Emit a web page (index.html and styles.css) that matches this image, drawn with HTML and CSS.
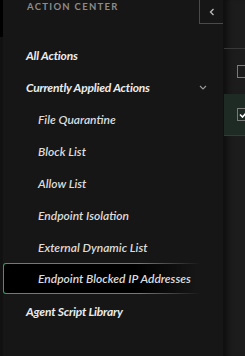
FILE: index.html
```html
<!DOCTYPE html>
<html lang="en">

<head>
    <meta charset="UTF-8">
    <meta name="viewport" content="width=device-width, initial-scale=1.0">
    <title>Action Center</title>
    <link rel="stylesheet" href="styles.css">
</head>

<body>
    <div class="rail"></div>

    <!-- Sidebar -->
    <aside class="sidebar">
        <div class="sidebar-head">
            <span class="sidebar-title">ACTION CENTER</span>
            <button class="collapse-btn" aria-label="Collapse">
                <svg width="6" height="8" viewBox="0 0 6 8">
                    <polyline points="4.5,1 1.5,4 4.5,7" fill="none" stroke="#bdbdbd" stroke-width="1.3"></polyline>
                </svg>
            </button>
        </div>

        <nav class="nav">
            <a class="nav-item top">All Actions</a>
            <a class="nav-item top group">
                <span>Currently Applied Actions</span>
                <svg class="caret" width="8" height="5" viewBox="0 0 8 5">
                    <polyline points="1,1 4,4 7,1" fill="none" stroke="#9a9a9a" stroke-width="1.1"></polyline>
                </svg>
            </a>
            <a class="nav-item sub">File Quarantine</a>
            <a class="nav-item sub">Block List</a>
            <a class="nav-item sub">Allow List</a>
            <a class="nav-item sub">Endpoint Isolation</a>
            <a class="nav-item sub">External Dynamic List</a>
            <a class="nav-item sub active">Endpoint Blocked IP Addresses</a>
            <a class="nav-item top">Agent Script Library</a>
        </nav>
    </aside>

    <!-- Main content peeking in -->
    <main class="main">
        <div class="table">
            <div class="row">
                <span class="check"></span>
            </div>
            <div class="row selected">
                <span class="check">
                    <svg width="9" height="7" viewBox="0 0 9 7">
                        <polyline points="1,3.5 3.5,6 8,1" fill="none" stroke="#fff" stroke-width="1.6"></polyline>
                    </svg>
                </span>
            </div>
        </div>
    </main>
</body>

</html>
```

FILE: styles.css
```css
/* General Styles */
body {
    margin: 0;
    height: 356px;
    display: flex;
    background: #1c1c1c;
    font-family: 'Lato', 'Noto Sans', sans-serif;
    overflow: hidden;
}

/* Left edge strip */
.rail {
    width: 3px;
    flex-shrink: 0;
    background: linear-gradient(#000 0 37px, #111 37px);
}

/* Sidebar */
.sidebar {
    width: 220px;
    flex-shrink: 0;
    background: #161616;
    border-right: 1px solid #101010;
}

.sidebar-head {
    display: flex;
    justify-content: space-between;
    height: 24px;
}

.sidebar-title {
    padding: 1px 0 0 24px;
    font-size: 9.5px;
    font-weight: 700;
    letter-spacing: 1.3px;
    color: #8c8c8c;
    line-height: 12px;
}

.collapse-btn {
    width: 24px;
    height: 24px;
    padding: 0 0 0 1px;
    background: transparent;
    border: none;
    border-left: 1px solid #4a4a4a;
    border-bottom: 1px solid #4a4a4a;
    display: flex;
    align-items: center;
    justify-content: center;
    cursor: pointer;
}

/* Nav list */
.nav {
    display: flex;
    flex-direction: column;
    margin-top: 15px;
}

.nav-item {
    height: 32px;
    display: flex;
    align-items: center;
    font-style: italic;
    font-size: 12px;
    color: #e4e4e4;
    cursor: pointer;
    box-sizing: border-box;
}

.nav-item.top {
    padding-left: 23px;
    font-weight: 700;
    color: #ececec;
    letter-spacing: -0.2px;
}

.nav-item.group {
    justify-content: space-between;
    padding-right: 16px;
}

.nav-item.sub {
    padding-left: 35px;
    font-weight: 600;
    color: #dcdcdc;
}

.caret {
    margin-top: 1px;
}

/* Active item: green outline fading to the right */
.nav-item.active {
    padding-left: 34px;
    height: 31px;
    margin-bottom: 1px;
    border: 1px solid transparent;
    border-radius: 3px;
    background:
        linear-gradient(90deg, #000 60%, #161616 88%) padding-box,
        linear-gradient(90deg, #1fa862 62%, #161616 90%) border-box;
}

/* Main area */
.main {
    flex: 1;
    box-shadow: inset 7px 0 6px -4px rgba(0, 0, 0, 0.55);
    padding-top: 48px;
}

.table {
    border-top: 1px solid #383838;
    border-bottom: 1px solid #383838;
}

.row {
    height: 45px;
    display: flex;
    align-items: center;
    padding-left: 13px;
}

.row.selected {
    height: 41px;
    background: #1e2a24;
}

.check {
    width: 11px;
    height: 11px;
    border: 1px solid #7a7a7a;
    display: flex;
    align-items: center;
    justify-content: center;
}
```
